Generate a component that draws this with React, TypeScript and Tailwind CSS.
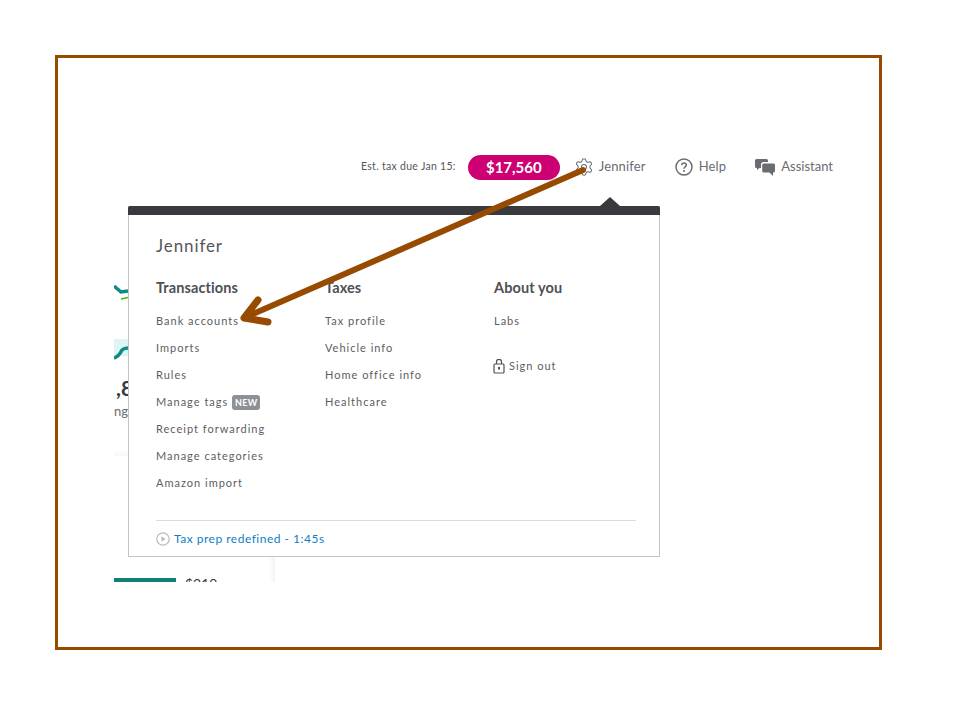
import { Settings } from "lucide-react";

const font = { fontFamily: "Lato, 'Open Sans', sans-serif" };

const HelpIcon = () => (
  <svg width="18" height="18" viewBox="0 0 18 18" fill="none" stroke="#6b6c72">
    <circle cx="9" cy="9" r="8" strokeWidth="1.500" />
    <path d="M6.700 7.100C6.800 5.700 7.800 5 9 5c1.300 0 2.300.8 2.300 2 0 1.900-2.300 1.800-2.300 3.700" strokeWidth="1.500" />
    <circle cx="9" cy="13" r="1" fill="#6b6c72" stroke="none" />
  </svg>
);

const ChatIcon = () => (
  <svg width="20" height="17" viewBox="0 0 20 17" fill="#6b6c72">
    <path d="M1.500 0h10A1.500 1.500 0 0 1 13 1.500V3H8.500A2.500 2.500 0 0 0 6 5.500V9H4.500L2 11V9h-.5A1.500 1.500 0 0 1 0 7.500v-6A1.500 1.500 0 0 1 1.500 0z" />
    <path d="M8.700 4.500h9.800A1.500 1.500 0 0 1 20 6v6a1.500 1.500 0 0 1-1.500 1.500H18V17l-3.500-3.500H8.700A1.500 1.500 0 0 1 7.200 12V6a1.500 1.500 0 0 1 1.500-1.500z" />
  </svg>
);

const LockIcon = () => (
  <svg width="12" height="15" viewBox="0 0 12 15" fill="none" stroke="#4f5055" strokeWidth="1.200">
    <path d="M3.500 5V2.800a2.500 2.500 0 0 1 5 0V5" />
    <rect x="1" y="5" width="10" height="9" rx="1" />
    <rect x="5" y="8" width="2" height="2.500" fill="#4f5055" stroke="none" />
  </svg>
);

const PlayIcon = () => (
  <svg width="14" height="14" viewBox="0 0 14 14" fill="none">
    <circle cx="7" cy="7" r="6.200" stroke="#b9babd" strokeWidth="1.200" />
    <path d="M5.500 4.300 9.500 7l-4 2.700z" fill="#b9babd" />
  </svg>
);

const MenuLink = ({ label, isNew }: { label: string; isNew?: boolean }) => (
  <a className="h-[27px] flex items-center text-[11px] tracking-[1px] text-[#5c5d61]">
    {label}
    {isNew ? (
      <span className="ml-[4px] w-[28px] h-[15px] rounded-[3px] bg-[#8d9096] text-white text-[9px] font-bold tracking-[0.3px] flex items-center justify-center">
        NEW
      </span>
    ) : null}
  </a>
);

const ColumnTitle = ({ title }: { title: string }) => (
  <h3 className="h-[18px] flex items-center text-[14.500px] tracking-[0.1px] font-bold text-[#4f5054] mb-[11px]">{title}</h3>
);

const transactions = [
  { label: "Bank accounts" },
  { label: "Imports" },
  { label: "Rules" },
  { label: "Manage tags", isNew: true },
  { label: "Receipt forwarding" },
  { label: "Manage categories" },
  { label: "Amazon import" },
];

const taxes = ["Tax profile", "Vehicle info", "Home office info", "Healthcare"];

const App = () => {
  return (
    <div className="w-[960px] h-[720px] bg-white overflow-hidden pt-[55px] pl-[55px]" style={font}>
      <div className="relative w-[827px] h-[595px] border-[3px] border-[#964b00] bg-white">
        {/* top bar */}
        <div className="flex items-center justify-end h-[24px] mt-[97px] pr-[46px] text-[#6b6c72]">
          <span className="text-[10.500px] tracking-[0.3px] text-[#55565a] mr-[12px]">Est. tax due Jan 15:</span>
          <span className="w-[92px] h-[25px] rounded-full bg-[#cc0073] text-white text-[15px] font-bold flex items-center justify-center mr-[14px]">
            $17,560
          </span>
          <Settings size={20} strokeWidth={1.3} />
          <span className="text-[13px] tracking-[0.15px] ml-[5px] mr-[29px]">Jennifer</span>
          <HelpIcon />
          <span className="text-[13px] tracking-[0.15px] ml-[6px] mr-[29px]">Help</span>
          <ChatIcon />
          <span className="text-[13px] ml-[6px]">Assistant</span>
        </div>

        {/* page content behind the menu */}
        <div className="relative w-[161px] h-[354px] ml-[56px] mt-[49px] overflow-hidden">
          <svg className="absolute left-0 top-[52px]" width="14" height="80" viewBox="0 0 14 80" fill="none">
            <path d="M0 6 7 12 14 11" stroke="#0f8a86" strokeWidth="3.500" />
            <path d="M7 19 14 17.500" stroke="#53b700" strokeWidth="1.500" />
            <rect x="0" y="59" width="14" height="17" fill="#dff5f5" />
            <path d="M0 78C4 77 6 74 8 70 10 68 12 68 14 68" stroke="#0f8a86" strokeWidth="3.500" />
          </svg>
          <span className="absolute left-[2px] top-[147px] text-[21px] leading-[26px] font-bold text-[#393a3d]">,8</span>
          <span className="absolute left-0 top-[175px] text-[13px] leading-[16px] text-[#6b6c72]">ng</span>
          <div className="absolute left-0 top-[222px] w-full h-[6px] bg-gradient-to-b from-white to-[#f6f6f7]" />
          <div className="absolute right-0 top-0 w-[6px] h-full bg-gradient-to-r from-white to-[#f3f3f5]" />
          <div className="absolute left-0 top-[350px] w-[62px] h-[4px] bg-[#128078]" />
          <span className="absolute left-[71px] top-[347px] text-[14px] leading-[18px] text-[#393a3d]">$219</span>
        </div>

        {/* account menu */}
        <div className="absolute left-[70px] top-[148px] w-[532px] h-[351px] bg-white border border-t-0 border-[#c4c4c6]">
          <div className="absolute right-[39px] top-[-9px] w-0 h-0 border-x-[10px] border-x-transparent border-b-[9px] border-b-[#393a3d]" />
          <div className="h-[9px] -mx-px bg-[#393a3d] rounded-t-[2px]" />
          <div className="pl-[27px] pr-[23px]">
            <div className="text-[17px] tracking-[0.9px] text-[#55565a] mt-[20px] mb-[22px] leading-[22px]">Jennifer</div>
            <div className="flex h-[241px]">
              <div className="w-[169px]">
                <ColumnTitle title="Transactions" />
                {transactions.map((item) => (
                  <MenuLink key={item.label} label={item.label} isNew={item.isNew} />
                ))}
              </div>
              <div className="w-[169px]">
                <ColumnTitle title="Taxes" />
                {taxes.map((item) => (
                  <MenuLink key={item} label={item} />
                ))}
              </div>
              <div>
                <ColumnTitle title="About you" />
                <MenuLink label="Labs" />
                <div className="flex items-center gap-[4px] -ml-px mt-[23px] text-[11px] tracking-[1px] text-[#5c5d61]">
                  <LockIcon />
                  Sign out
                </div>
              </div>
            </div>
            <div className="border-t border-[#dcdcde] pt-[9px] flex items-center gap-[4px] text-[12px] tracking-[0.5px] text-[#0f7ec4]">
              <PlayIcon />
              Tax prep redefined - 1:45s
            </div>
          </div>
        </div>

        {/* annotation arrow */}
        <svg className="absolute left-[-58px] top-[-58px] pointer-events-none" width="960" height="720" fill="none">
          <path d="M583 170 246 317" stroke="#964b00" strokeWidth="6" strokeLinecap="round" />
          <path d="M258 300 244 318 268 322" stroke="#964b00" strokeWidth="7" strokeLinecap="round" strokeLinejoin="round" />
        </svg>
      </div>
    </div>
  );
};

export default App;
